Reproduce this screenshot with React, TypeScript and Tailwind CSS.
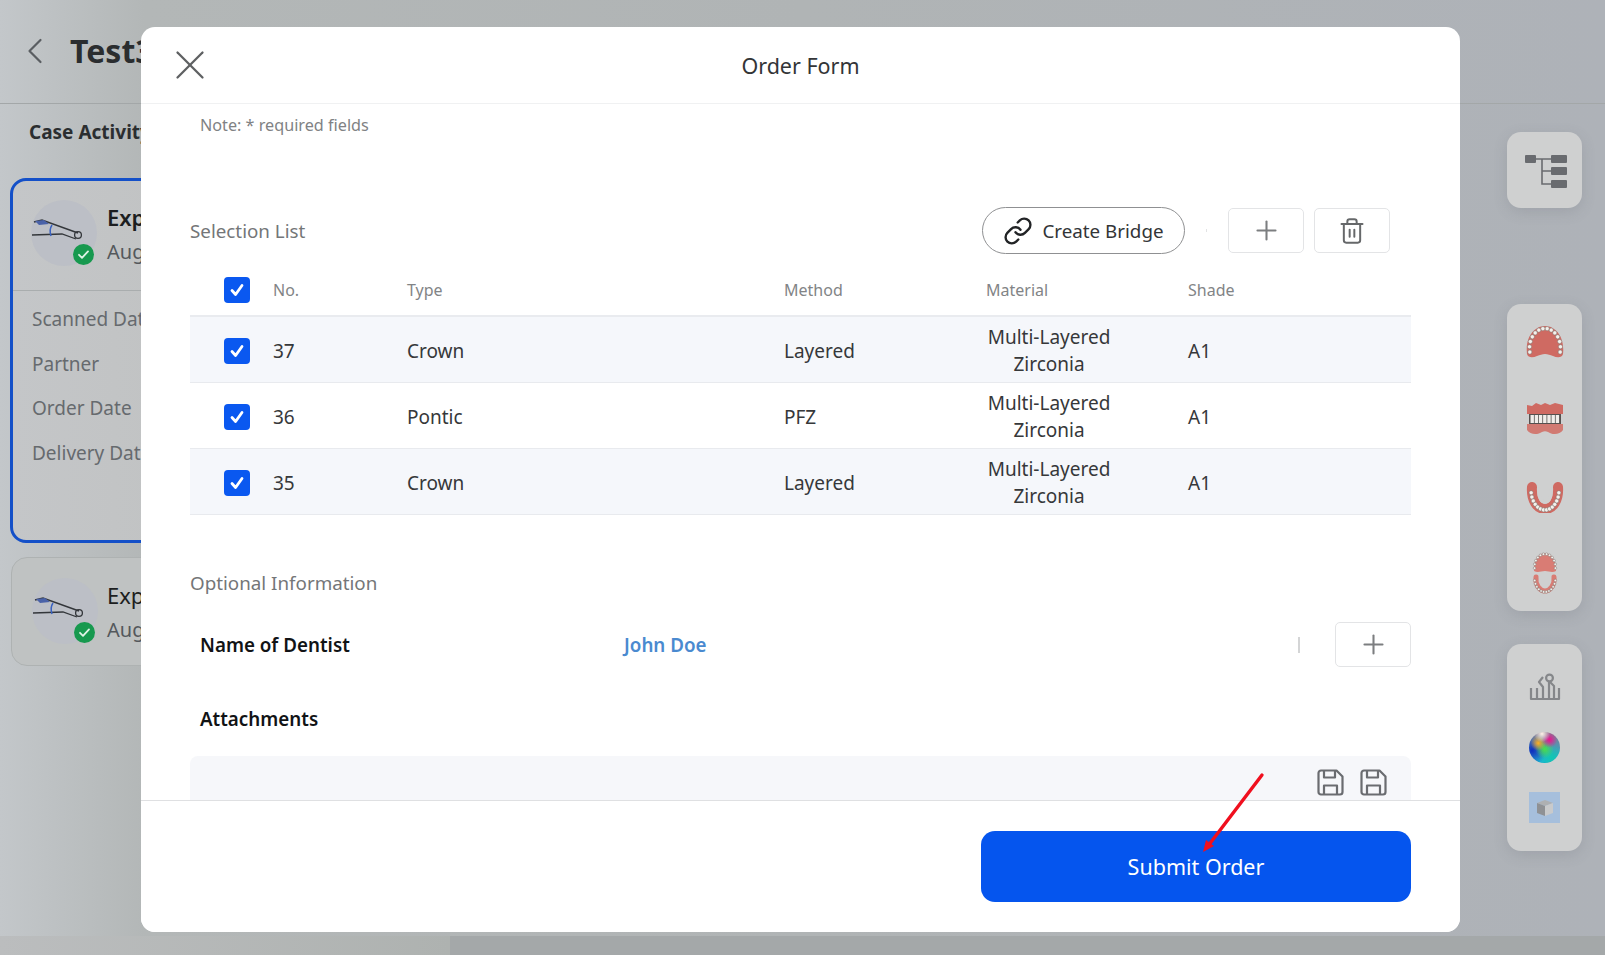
import React from 'react';
import { ChevronLeft, Link, Plus, Trash2, X } from 'lucide-react';

const rows = [
  { no: '37', type: 'Crown', method: 'Layered', tint: true },
  { no: '36', type: 'Pontic', method: 'PFZ', tint: false },
  { no: '35', type: 'Crown', method: 'Layered', tint: true },
];

const Check: React.FC = () => (
  <span className="flex items-center justify-center w-[26px] h-[26px] rounded-[4px] bg-[#0a58f0]">
    <svg viewBox="0 0 26 26" className="w-[26px] h-[26px]" fill="none" stroke="#fff" strokeWidth="2.8" strokeLinecap="round" strokeLinejoin="round">
      <path d="M8 13.5l3.6 4L18 8.5" />
    </svg>
  </span>
);

const SaveIcon: React.FC = () => (
  <svg viewBox="0 0 27 27" className="w-[27px] h-[27px]" fill="none" stroke="#6a6c70" strokeWidth="2.2" strokeLinejoin="round">
    <path d="M4 1.5h15.5l6 6V23a2.5 2.5 0 0 1-2.5 2.5H4A2.5 2.5 0 0 1 1.5 23V4A2.5 2.5 0 0 1 4 1.5z" />
    <path d="M7 1.5v7h11v-7" />
    <path d="M7 25.5v-9h13v9" />
  </svg>
);

const FingerIcon: React.FC = () => (
  <svg viewBox="0 0 64 66" className="absolute inset-0 w-[64px] h-[66px]" fill="none">
    <path d="M1 35l30-1 14 5" stroke="#33363a" strokeWidth="1.3" />
    <path d="M3 22l8-2 36 13" stroke="#33363a" strokeWidth="1.5" />
    <circle cx="47" cy="35" r="3.4" stroke="#33363a" strokeWidth="1.3" />
    <path d="M4 21l9-1 5 4-10 1z" fill="#4a62a8" />
    <path d="M21 25c-2 3-2 8-1 11" stroke="#3a62c0" strokeWidth="1.5" />
  </svg>
);

const Avatar: React.FC = () => (
  <div className="relative w-[66px] h-[66px] rounded-full bg-[#bcbfc6] shrink-0">
    <FingerIcon />
    <span className="absolute left-[42px] top-[44px] w-[21px] h-[21px] rounded-full bg-[#17994f] flex items-center justify-center">
      <svg viewBox="0 0 21 21" className="w-[21px] h-[21px]" fill="none" stroke="#dff3e6" strokeWidth="1.8" strokeLinecap="round" strokeLinejoin="round">
        <path d="M6 10.8l3 3 6-6.4" />
      </svg>
    </span>
  </div>
);

const teethArc = (cx: number, cy: number, rx: number, ry: number, from: number, to: number, n: number, r: number) =>
  Array.from({ length: n }, (_, i) => {
    const t = ((from + ((to - from) * i) / (n - 1)) * Math.PI) / 180;
    return <circle key={i} cx={cx + rx * Math.cos(t)} cy={cy - ry * Math.sin(t)} r={r} fill="#f4f1ec" stroke="#77736f" strokeWidth="0.5" />;
  });

const UpperArch: React.FC = () => (
  <svg viewBox="0 0 38 34" className="w-[38px] h-[34px]">
    <path d="M1 29C-1 11 9 1 19 1c10 0 20 10 18 28-1 4-6 4-10 2-3-1-5-2-8-2s-5 1-8 2c-4 2-9 2-10-2z" fill="#cf6a62" />
    {teethArc(19, 23, 15.5, 19.5, -12, 192, 14, 2.1)}
  </svg>
);

const FrontTeeth: React.FC = () => (
  <svg viewBox="0 0 38 34" className="w-[38px] h-[34px]">
    <path d="M1 3l5 1 4-3 5 2 4-2 5 2 5-2 8 2v9H1z" fill="#cf6a62" />
    <rect x="3" y="12" width="32" height="10" fill="#55514f" />
    {Array.from({ length: 7 }, (_, i) => (
      <rect key={i} x={4.5 + i * 4.2} y="13" width="3.4" height="8" fill="#f1eeea" />
    ))}
    <path d="M1 22h36v6c-3 5-11 5-15 2-2-1-4-1-6 0-4 3-12 3-15-2z" fill="#d17a72" />
  </svg>
);

const LowerArch: React.FC = () => (
  <svg viewBox="0 0 38 32" className="w-[38px] h-[32px]">
    <path d="M6 6c-1 13 5 22 13 22s14-9 13-22" fill="none" stroke="#cf6a62" strokeWidth="10" strokeLinecap="round" />
    <path d="M13 8c-1 8 2 13 6 13s7-5 6-13" fill="none" stroke="#cfd0d0" strokeWidth="3" strokeLinecap="round" />
    {teethArc(19, 9, 14, 20, 188, 352, 14, 2.1)}
  </svg>
);

const BothArches: React.FC = () => (
  <svg viewBox="0 0 26 42" className="w-[26px] h-[42px]">
    <path d="M2 19C1 8 7 1 13 1s12 7 11 18c-4 2-7 0-11 0s-7 2-11 0z" fill="#d97c74" />
    {teethArc(13, 15, 10.5, 13, -5, 185, 12, 1.3)}
    <path d="M4 25c-1 8 4 14 9 14s10-6 9-14" fill="none" stroke="#d97c74" strokeWidth="5" strokeLinecap="round" />
    {teethArc(13, 26, 10.5, 14, 190, 350, 12, 1.3)}
  </svg>
);

const ToolsIcon: React.FC = () => (
  <svg viewBox="0 0 32 28" className="w-[32px] h-[28px]" fill="none" stroke="#85878a" strokeWidth="2.2" strokeLinejoin="round">
    <path d="M2 15v11h28V15" />
    <path d="M8 26V15" />
    <path d="M14 26V14l-4-5 4-5" />
    <path d="M20 26V9" />
    <circle cx="20.5" cy="5" r="3.4" />
    <path d="M25 26V13l-4-4" />
  </svg>
);

const ColorSphere: React.FC = () => (
  <div className="relative w-[31px] h-[31px] rounded-full overflow-hidden bg-[radial-gradient(circle_at_42%_6%,#fff2e8_0%,rgba(255,242,232,0)_24%),radial-gradient(circle_at_66%_25%,#f0108c_0%,rgba(240,16,140,0)_26%),radial-gradient(circle_at_30%_36%,#ffb020_0%,rgba(255,176,32,0)_26%),radial-gradient(circle_at_50%_55%,#48e048_0%,rgba(72,224,72,0)_40%),radial-gradient(circle_at_72%_82%,#10c8b0_0%,rgba(16,200,176,0)_38%),radial-gradient(circle_at_10%_60%,#0c2cc0_0%,rgba(12,44,192,0)_44%),linear-gradient(#8a7890,#12b8d8)]">
    <div className="absolute inset-0 rounded-full bg-[radial-gradient(circle_at_50%_45%,rgba(0,0,0,0)_70%,rgba(0,0,0,0.6)_100%)]" />
  </div>
);

const CubeIcon: React.FC = () => (
  <div className="w-[31px] h-[31px] bg-[#a6bfdc] flex items-center justify-center">
    <svg viewBox="0 0 18 18" className="w-[18px] h-[18px]">
      <path d="M1 4l8-3 8 3-8 3z" fill="#aeb0b2" />
      <path d="M1 4l8 3v10l-8-3z" fill="#8f9194" />
      <path d="M9 7l8-3v10l-8 3z" fill="#c9cacb" />
    </svg>
  </div>
);

const TreeIcon: React.FC = () => (
  <svg viewBox="0 0 48 40" className="w-[48px] h-[40px]" fill="#696b6f">
    <rect x="4" y="5" width="11" height="8" rx="1" />
    <rect x="30" y="5" width="16" height="8" rx="1" />
    <rect x="30" y="17" width="16" height="8" rx="1" />
    <rect x="30" y="30" width="16" height="8" rx="1" />
    <path d="M15 9h15M21 9v25h9M21 21h9" fill="none" stroke="#696b6f" strokeWidth="1.6" />
  </svg>
);

const IconButton: React.FC<{ children: React.ReactNode }> = ({ children }) => (
  <button className="w-[76px] h-[45px] rounded-[5px] border border-[#e3e4e6] bg-white flex items-center justify-center text-[#7c7e80]">
    {children}
  </button>
);

const Toolbar: React.FC<{ className: string; children: React.ReactNode }> = ({ className, children }) => (
  <div className={`w-[75px] rounded-[14px] bg-[#cfd0d0] shadow-[0_4px_14px_rgba(90,95,105,0.18)] flex flex-col items-center ${className}`}>
    {children}
  </div>
);

const App: React.FC = () => {
  return (
    <div className="relative w-[1605px] h-[955px] overflow-hidden flex flex-col font-['Noto_Sans',sans-serif] bg-[linear-gradient(90deg,#c3c7ca_0%,#b3b7b7_9%,#b0b4b5_50%,#aeb2b8_100%)]">
      {/* page behind the dialog */}
      <header className="h-[104px] shrink-0 border-b border-[#a3a7a8] flex items-center pl-[13px] pb-[2px]">
        <ChevronLeft className="w-[44px] h-[44px] text-[#5a5e62]" strokeWidth={1.2} />
        <h1 className="ml-[13px] text-[32px] font-bold text-[#2a2d2f] leading-none">Test3</h1>
      </header>

      <div className="flex-1 flex justify-between min-h-0">
        <div className="w-[420px] shrink-0">
          <h2 className="ml-[29px] mt-[15px] text-[19px] leading-[26px] font-bold text-[#2b2e30]">Case Activity</h2>
          <div className="ml-[10px] mt-[33px] h-[365px] rounded-[16px] border-[3px] border-[#1450c8] bg-[linear-gradient(90deg,#c4c6c8,#bcbebc)]">
            <div className="flex gap-[10px] pl-[18px] pt-[19px] h-[110px] border-b border-[#a9adae]">
              <Avatar />
              <div>
                <div className="text-[22px] leading-[30px] font-semibold text-[#1c1e20] mt-[2px]">Exp</div>
                <div className="text-[20px] leading-[28px] text-[#54585c] mt-[6px]">Aug</div>
              </div>
            </div>
            <div className="pl-[19px] pt-[14px] flex flex-col text-[19px] leading-[28px] gap-[16.5px] text-[#666a6e]">
              <span>Scanned Date</span>
              <span>Partner</span>
              <span>Order Date</span>
              <span>Delivery Date</span>
            </div>
          </div>
          <div className="ml-[11px] mt-[14px] h-[109px] rounded-[16px] border border-[#aeb2b2] bg-[#bfc2c2] flex gap-[9px] pl-[20px] pt-[20px]">
            <Avatar />
            <div>
              <div className="text-[22px] leading-[30px] text-[#1c1e20] mt-[2px]">Exp</div>
              <div className="text-[20px] leading-[28px] text-[#54585c] mt-[6px]">Aug</div>
            </div>
          </div>
        </div>

        <div className="pr-[23px] pt-[28px] flex flex-col gap-[96px]">
          <Toolbar className="h-[76px] justify-center">
            <TreeIcon />
          </Toolbar>
          <div className="flex flex-col gap-[33px]">
            <Toolbar className="h-[307px] pt-[21px]">
              <UpperArch />
              <div className="mt-[43px]"><FrontTeeth /></div>
              <div className="mt-[45px]"><LowerArch /></div>
              <div className="mt-[39px]"><BothArches /></div>
            </Toolbar>
            <Toolbar className="h-[207px] pt-[29px]">
              <ToolsIcon />
              <div className="mt-[31px]"><ColorSphere /></div>
              <div className="mt-[29px]"><CubeIcon /></div>
            </Toolbar>
          </div>
        </div>
      </div>

      <div className="h-[19px] shrink-0 flex">
        <div className="w-[450px] bg-[linear-gradient(90deg,#bbbdbe,#aeb2b0)]" />
        <div className="flex-1 bg-[#a4a8a9]" />
      </div>

      {/* dialog */}
      <div className="absolute left-[141px] top-[27px] w-[1319px] h-[905px] rounded-[14px] bg-white flex flex-col overflow-hidden">
        <div className="h-[77px] shrink-0 border-b border-[#f0f1f2] relative flex items-center justify-center pt-[2px]">
          <X className="absolute left-[24px] top-[13px] w-[50px] h-[50px] text-[#5e6062]" strokeWidth={1.1} />
          <span className="text-[21.5px] text-[#333537]">Order Form</span>
        </div>

        <div className="flex-1 min-h-0 overflow-hidden px-[49px]">
          <p className="ml-[10px] mt-[9px] text-[16.2px] leading-[24px] text-[#808284]">Note: * required fields</p>

          <div className="mt-[70px] h-[47px] flex items-center">
            <span className="flex-1 text-[18.8px] pt-[2px] text-[#747678]">Selection List</span>
            <button className="w-[203px] h-[47px] pt-[1px] rounded-full border border-[#8f9092] flex items-center justify-center gap-[9px] text-[18.8px] text-[#333537]">
              <Link className="w-[30px] h-[30px] text-[#222426]" strokeWidth={1.9} />
              Create Bridge
            </button>
            <span className="mx-[21px] w-px h-[3px] bg-[#e2e3e4]" />
            <div className="flex gap-[10px] mr-[21px]">
              <IconButton>
                <Plus className="w-[31px] h-[31px]" strokeWidth={1.6} />
              </IconButton>
              <IconButton>
                <Trash2 className="w-[28px] h-[28px] text-[#66686a]" strokeWidth={1.7} />
              </IconButton>
            </div>
          </div>

          <div className="mt-[17px] h-[46px] pb-[7px] grid grid-cols-[83px_134px_377px_202px_202px_1fr] items-center border-b-2 border-[#e9ebef] text-[16px] text-[#828486]">
            <span className="pl-[34px]"><Check /></span>
            <span>No.</span>
            <span>Type</span>
            <span>Method</span>
            <span>Material</span>
            <span>Shade</span>
          </div>
          {rows.map((r) => (
            <div key={r.no} className={`h-[66px] pt-[3px] grid grid-cols-[83px_134px_377px_202px_202px_1fr] items-center border-b border-[#e8eaee] text-[19px] text-[#36383a] ${r.tint ? 'bg-[#f5f7fb]' : 'bg-white'}`}>
              <span className="pl-[34px]"><Check /></span>
              <span>{r.no}</span>
              <span>{r.type}</span>
              <span>{r.method}</span>
              <span className="w-[126px] text-center leading-[27px] whitespace-nowrap">
                <span className="block">Multi-Layered</span>
                <span className="block">Zirconia</span>
              </span>
              <span>A1</span>
            </div>
          ))}

          <div className="mt-[54px] text-[18.8px] leading-[28px] text-[#747678]">Optional Information</div>

          <div className="mt-[25px] h-[45px] flex items-center">
            <span className="ml-[10px] w-[424px] pt-[2px] text-[18.8px] font-semibold text-[#111315]">Name of Dentist</span>
            <span className="flex-1 pt-[2px] text-[18.8px] font-semibold text-[#4a8ad0]">John Doe</span>
            <span className="w-[2px] h-[16px] bg-[#d4d5d6] mr-[35px]" />
            <IconButton>
              <Plus className="w-[31px] h-[31px]" strokeWidth={1.6} />
            </IconButton>
          </div>

          <div className="ml-[10px] mt-[38px] text-[18.8px] leading-[28px] font-semibold text-[#111315]">Attachments</div>

          <div className="mt-[23px] h-[60px] rounded-t-[8px] bg-[#f6f7fa] flex justify-end gap-[16px] pt-[13px] pr-[24px]">
            <SaveIcon />
            <SaveIcon />
          </div>
        </div>

        <div className="h-[132px] shrink-0 border-t border-[#dfe0e2] bg-white flex justify-end pt-[30px] pr-[49px]">
          <button className="w-[430px] h-[71px] pt-[2px] rounded-[14px] bg-[#0555ee] text-white text-[21.5px]">Submit Order</button>
        </div>
      </div>

      {/* red annotation arrow */}
      <svg className="absolute left-[1195px] top-[765px] w-[80px] h-[95px]" viewBox="0 0 80 95" fill="none">
        <path d="M67 10L13 81" stroke="#f00f1e" strokeWidth="3.4" strokeLinecap="round" />
        <path d="M8 87l3-12 8 6z" fill="#f00f1e" />
      </svg>
    </div>
  );
};

export default App;
